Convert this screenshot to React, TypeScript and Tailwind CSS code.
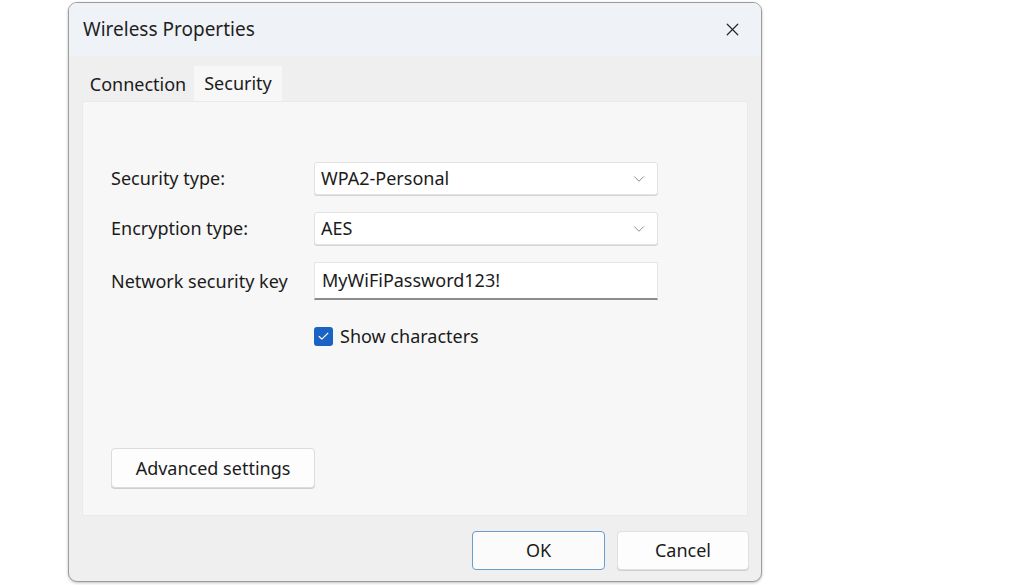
import { X, ChevronDown, Check } from "lucide-react";

const font = { fontFamily: '"Noto Sans", "Open Sans", sans-serif' };

function Select({ value }: { value: string }) {
    return (
        <div className="flex h-[33px] w-[344px] items-center justify-between rounded-[3px] border border-[#e2e2e2] bg-white pl-[6px] pr-[9px] shadow-[0_1px_0_#d6d6d6]">
            <span className="text-[18px] text-[#1b1b1b]">{value}</span>
            <ChevronDown className="h-[18px] w-[18px] text-[#8a8a8a]" strokeWidth={1.3} />
        </div>
    );
}

export default function App() {
    return (
        <div className="min-h-[585px] w-[1024px] overflow-hidden bg-white" style={font}>
            <div className="ml-[68px] mt-[2px] flex h-[580px] w-[694px] flex-col overflow-hidden rounded-[9px] border border-[#9c9c9c] bg-[#efefef] shadow-[0_1px_3px_rgba(0,0,0,0.25)]">
                {/* Title bar */}
                <div className="flex h-[53px] items-center justify-between bg-[#eff2f7] pl-[14px] pr-[18px]">
                    <span className="text-[19px] text-[#1f1f1f]">Wireless Properties</span>
                    <X className="h-[21px] w-[21px] text-[#262626]" strokeWidth={1.4} />
                </div>

                {/* Tabs */}
                <div className="flex items-end pl-[13px] pt-[10px]">
                    <div className="flex h-[33px] w-[112px] items-center justify-center text-[18px] text-[#1b1b1b]">Connection</div>
                    <div className="flex h-[35px] w-[88px] items-center justify-center bg-[#f7f7f7] text-[18px] text-[#1b1b1b]">Security</div>
                </div>

                {/* Tab panel */}
                <div className="mx-[13px] flex h-[415px] flex-col border border-[#eaeaea] bg-[#f7f7f7] pl-[28px] pt-[60px]">
                    <div className="flex flex-col gap-[17px]">
                        <div className="flex items-center">
                            <span className="w-[203px] text-[18px] text-[#1b1b1b]">Security type:</span>
                            <Select value="WPA2-Personal" />
                        </div>
                        <div className="flex items-center">
                            <span className="w-[203px] text-[18px] text-[#1b1b1b]">Encryption type:</span>
                            <Select value="AES" />
                        </div>
                        <div className="flex items-center">
                            <span className="w-[203px] text-[18px] text-[#1b1b1b]">Network security key</span>
                            <div className="flex h-[38px] w-[344px] items-center border border-b-2 border-[#e6e6e6] border-b-[#8c8c8c] bg-white pl-[7px]">
                                <span className="text-[18px] text-[#1b1b1b]">MyWiFiPassword123!</span>
                            </div>
                        </div>
                    </div>

                    <div className="ml-[203px] mt-[23px] flex items-center gap-[7px]">
                        <div className="flex h-[19px] w-[19px] items-center justify-center rounded-[3px] bg-[#1a63c4]">
                            <Check className="h-[13px] w-[13px] text-white" strokeWidth={2} />
                        </div>
                        <span className="text-[18px] text-[#1b1b1b]">Show characters</span>
                    </div>

                    <div className="mt-[98px] flex h-[40px] w-[204px] items-center justify-center rounded-[4px] border border-[#dcdcdc] bg-[#fdfdfd] text-[18px] text-[#1b1b1b] shadow-[0_1px_0_#cfcfcf]">
                        Advanced settings
                    </div>
                </div>

                {/* Footer */}
                <div className="flex flex-1 items-start justify-end gap-[12px] pr-[12px] pt-[15px]">
                    <div className="flex h-[39px] w-[133px] items-center justify-center rounded-[4px] border border-[#6a9ccf] bg-[#fbfbfb] text-[18px] text-[#1b1b1b]">
                        OK
                    </div>
                    <div className="flex h-[39px] w-[132px] items-center justify-center rounded-[4px] border border-[#e0e0e0] bg-[#fdfdfd] text-[18px] text-[#1b1b1b] shadow-[0_1px_0_#cfcfcf]">
                        Cancel
                    </div>
                </div>
            </div>
        </div>
    );
}
